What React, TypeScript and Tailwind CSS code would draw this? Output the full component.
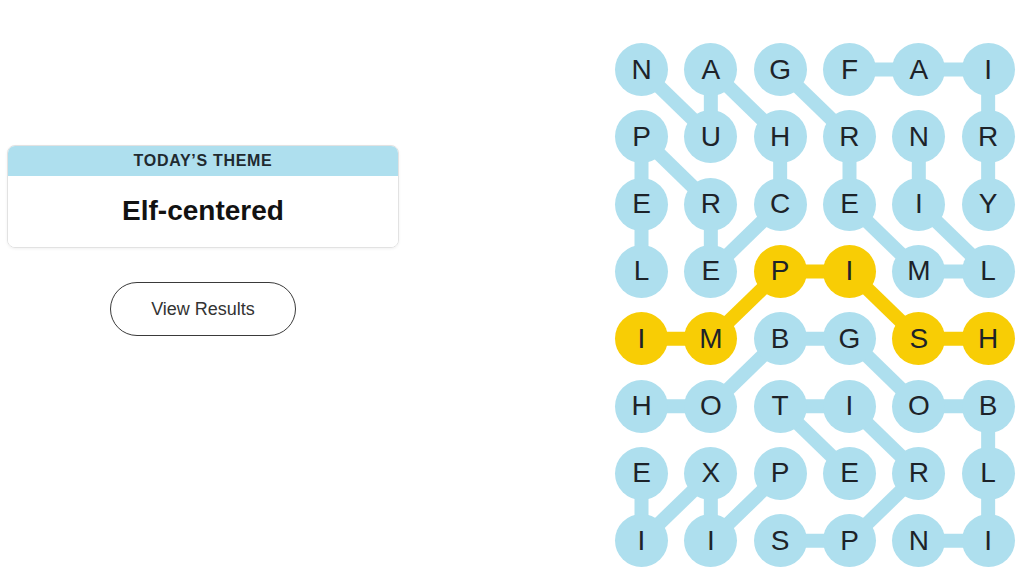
const letters = [
    "NAGFAI",
    "PUHRNR",
    "ERCEIY",
    "LEPIML",
    "IMBGSH",
    "HOTIOB",
    "EXPERL",
    "IISPNI",
];

// spangram cells [col, row]
const gold = ["0,4", "1,4", "2,3", "3,3", "4,4", "5,4"];

// connectors between cells: [c1, r1, c2, r2]
const blueLinks = [
    [0, 0, 1, 1], [1, 0, 1, 1], [1, 0, 2, 1], [2, 0, 3, 1],
    [3, 0, 4, 0], [4, 0, 5, 0], [5, 0, 5, 1],
    [0, 1, 0, 2], [0, 1, 1, 2], [2, 1, 2, 2], [3, 1, 3, 2], [4, 1, 4, 2], [5, 1, 5, 2],
    [0, 2, 0, 3], [1, 2, 1, 3], [2, 2, 1, 3], [3, 2, 4, 3], [4, 2, 5, 3], [4, 3, 5, 3],
    [2, 4, 3, 4], [2, 4, 1, 5], [3, 4, 4, 5],
    [0, 5, 1, 5], [2, 5, 3, 5], [2, 5, 3, 6], [3, 5, 4, 6], [4, 5, 5, 5], [5, 5, 5, 6],
    [0, 6, 0, 7], [1, 6, 0, 7], [1, 6, 1, 7], [2, 6, 1, 7], [4, 6, 3, 7],
    [2, 7, 3, 7], [4, 7, 5, 7], [5, 6, 5, 7],
];

const goldLinks = [
    [0, 4, 1, 4], [1, 4, 2, 3], [2, 3, 3, 3], [3, 3, 4, 4], [4, 4, 5, 4],
];

const cx = (c: number) => 26.5 + c * 69.33;
const cy = (r: number) => 26.5 + r * 67.33;

export default function App() {
    return (
        <div className="flex w-[1024px] h-[576px] bg-white overflow-hidden font-['Liberation_Sans',Arial,sans-serif]">

            {/* Left: theme card + button */}
            <div className="pt-[145px] pl-[7px] w-[399px] flex flex-col items-center shrink-0">
                <div className="w-full rounded-lg border border-[#e2e2e2] overflow-hidden shadow-[0_1px_3px_rgba(0,0,0,0.06)]">
                    <div className="h-[30px] bg-[#aedfee] flex items-center justify-center text-[16px] font-bold tracking-[0.7px] text-[#1f2a30]">
                        TODAY’S THEME
                    </div>
                    <div className="h-[71px] bg-white flex items-center justify-center pb-[1px] text-[28px] font-bold text-[#121212]">
                        Elf-centered
                    </div>
                </div>

                <button className="mt-[34px] w-[186px] h-[54px] rounded-full border-[1.5px] border-[#3a3a3a] bg-white text-[18px] text-[#333]">
                    View Results
                </button>
            </div>

            {/* Right: board */}
            <div className="ml-[216px] pt-[43px]">
                <div className="relative">
                    <svg className="absolute inset-0" width="400" height="525">
                        {blueLinks.map(([a, b, c, d], i) => (
                            <line key={i} x1={cx(a)} y1={cy(b)} x2={cx(c)} y2={cy(d)} stroke="#aedfee" strokeWidth="14" />
                        ))}
                        {goldLinks.map(([a, b, c, d], i) => (
                            <line key={"g" + i} x1={cx(a)} y1={cy(b)} x2={cx(c)} y2={cy(d)} stroke="#f8cd05" strokeWidth="14" />
                        ))}
                    </svg>
                    <div className="relative grid grid-cols-[repeat(6,53px)] gap-x-[16.33px] gap-y-[14.33px]">
                        {letters.map((row, r) =>
                            row.split("").map((ch, c) => {
                                const isGold = gold.includes(c + "," + r);
                                return (
                                    <div
                                        key={r + "-" + c}
                                        className={`w-[53px] h-[53px] rounded-full flex items-center justify-center text-[28px] text-[#1d2329] ${isGold ? "bg-[#f8cd05]" : "bg-[#aedfee]"}`}
                                    >
                                        {ch}
                                    </div>
                                );
                            })
                        )}
                    </div>
                </div>
            </div>
        </div>
    );
}
